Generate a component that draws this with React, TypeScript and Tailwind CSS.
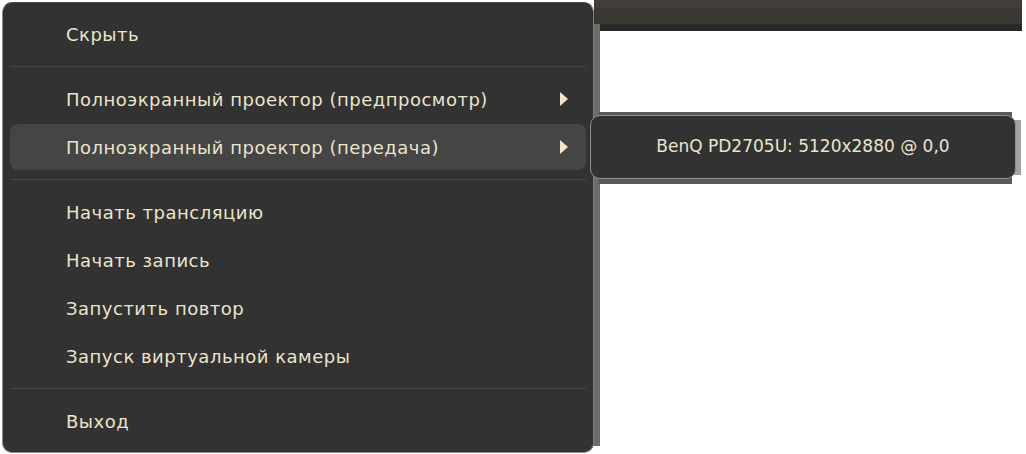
type Row = { label: string; sub?: boolean; active?: boolean } | "sep";

const rows: Row[] = [
  { label: "Скрыть" },
  "sep",
  { label: "Полноэкранный проектор (предпросмотр)", sub: true },
  { label: "Полноэкранный проектор (передача)", sub: true, active: true },
  "sep",
  { label: "Начать трансляцию" },
  { label: "Начать запись" },
  { label: "Запустить повтор" },
  { label: "Запуск виртуальной камеры" },
  "sep",
  { label: "Выход" },
];

const Arrow = () => (
  <svg width="8" height="14" viewBox="0 0 8 14" className="mr-[18px]">
    <path d="M0 0 L8 7 L0 14 Z" fill="#f0e8c4" />
  </svg>
);

export default function App() {
  return (
    <div
      className="relative w-[1026px] h-[454px] bg-white overflow-hidden"
      style={{ fontFamily: '"DejaVu Sans", "Noto Sans", sans-serif' }}
    >
      {/* window strip behind the menu */}
      <div className="absolute left-[594px] top-0 w-[428px] h-[31px] flex flex-col">
        <div className="h-[8px] bg-[#423d39]" />
        <div className="h-[16px] bg-[#3b3733]" />
        <div className="h-[7px] bg-[#282828]" />
      </div>
      <div className="absolute left-[593px] top-[24px] w-[7px] h-[422px] bg-[#6c6c6c]" />

      {/* main menu */}
      <div className="absolute left-[2px] top-[2px] w-[592px] h-[451px] rounded-[10px] border border-[#8e8e8e] border-t-[#4a4a4a] border-r-[#7a7a7a] bg-[#323232] px-[7px] pt-[7px] flex flex-col">
        {rows.map((r, i) =>
          r === "sep" ? (
            <div key={i} className="h-px shrink-0 bg-[#464646] my-[8px]" />
          ) : (
            <div
              key={i}
              className={`h-[46px] shrink-0 my-px flex items-center justify-between rounded-[8px] pl-[56px] text-[18px] text-[#ebe4cb] tracking-[0.5px] ${
                r.active ? "bg-[#454545]" : ""
              }`}
            >
              <span>{r.label}</span>
              {r.sub && <Arrow />}
            </div>
          )
        )}
      </div>

      {/* submenu */}
      <div className="absolute left-[598px] top-[112px] w-[414px] h-[72px] bg-[#5a5a5a]" />
      <div className="absolute left-[1012px] top-[120px] w-[9px] h-[55px] bg-[#a3a3a3]" />
      <div className="absolute left-[590px] top-[115px] w-[426px] h-[64px] rounded-[10px] border border-[#8e8e8e] bg-[#323232] flex items-center justify-center text-[17px] text-[#ebe4cb]">
        BenQ PD2705U: 5120x2880 @ 0,0
      </div>
    </div>
  );
}
